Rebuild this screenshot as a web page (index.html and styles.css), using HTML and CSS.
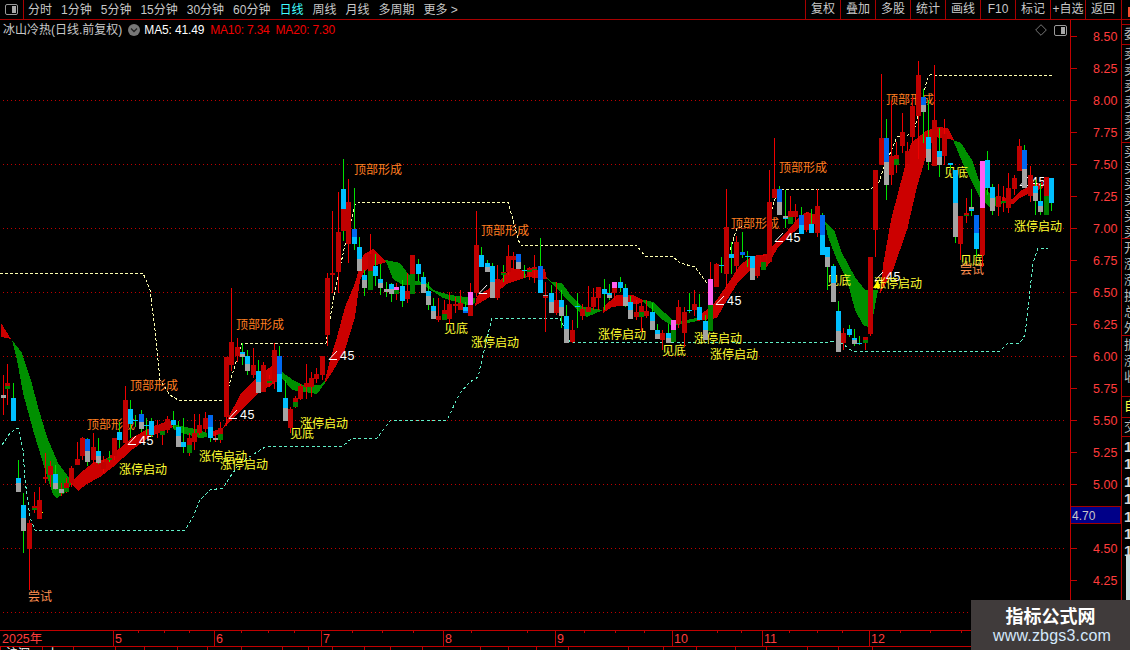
FILE: index.html
```html
<!DOCTYPE html>
<html lang="zh-CN">
<head>
<meta charset="utf-8">
<title>冰山冷热</title>
<link rel="stylesheet" href="styles.css">
</head>
<body>
<header class="toolbar">
  <div class="panel-btn">
    <svg class="panel-icon" viewBox="0 0 13 11"><rect class="pi-frame" x="0.5" y="0.5" width="12" height="10" rx="1.5"/><rect class="pi-fill" x="7" y="2" width="4" height="7"/></svg>
  </div>
  <nav class="periods">
    <span>分时</span><span>1分钟</span><span>5分钟</span><span>15分钟</span><span>30分钟</span><span>60分钟</span><span class="active">日线</span><span>周线</span><span>月线</span><span>多周期</span><span>更多 &gt;</span>
  </nav>
  <nav class="actions">
    <span>复权</span><span>叠加</span><span>多股</span><span>统计</span><span>画线</span><span>F10</span><span>标记</span><span>+自选</span><span>返回</span>
  </nav>
  <div class="corner"><i class="corner-mark"></i></div>
</header>

<main class="stage">
  <section class="chart">
    <div class="legend">
      <span class="legend-title">冰山冷热(日线.前复权)</span>
      <svg class="legend-toggle" viewBox="0 0 12 12"><circle class="lt-disc" cx="6" cy="6" r="6"/><path class="lt-chev" d="M3 4.5 6 7.5 9 4.5"/></svg>
      <span class="ma-white">MA5: 41.49</span>
      <span class="ma-red">MA10: 7.34</span>
      <span class="ma-red">MA20: 7.30</span>
    </div>
    <div class="chart-tools">
      <svg class="diamond" viewBox="0 0 12 12"><path class="dm" d="M6 .7 11.3 6 6 11.3 .7 6Z"/></svg>
      <svg class="panel-icon" viewBox="0 0 13 11"><rect class="pi-frame" x="0.5" y="0.5" width="12" height="10" rx="1.5"/><rect class="pi-fill" x="7" y="2" width="4" height="7"/></svg>
    </div>
    <svg id="plot" class="plot" viewBox="0 20 1070 610" width="1070" height="610"></svg>
  </section>

  <aside class="price-axis">
    <div class="tick"><i></i><b>8.50</b></div>
    <div class="tick"><i></i><b>8.25</b></div>
    <div class="tick"><i></i><b>8.00</b></div>
    <div class="tick"><i></i><b>7.75</b></div>
    <div class="tick"><i></i><b>7.50</b></div>
    <div class="tick"><i></i><b>7.25</b></div>
    <div class="tick"><i></i><b>7.00</b></div>
    <div class="tick"><i></i><b>6.75</b></div>
    <div class="tick"><i></i><b>6.50</b></div>
    <div class="tick"><i></i><b>6.25</b></div>
    <div class="tick"><i></i><b>6.00</b></div>
    <div class="tick"><i></i><b>5.75</b></div>
    <div class="tick"><i></i><b>5.50</b></div>
    <div class="tick"><i></i><b>5.25</b></div>
    <div class="tick"><i></i><b>5.00</b></div>
    <div class="tick"><i></i><b>4.75</b></div>
    <div class="tick"><i></i><b>4.50</b></div>
    <div class="tick"><i></i><b>4.25</b></div>
    <div class="tick"><i></i></div>
    <div class="cursor-price">4.70</div>
  </aside>

  <aside class="side">
    <div class="side-gap"></div>
    <div class="side-cell h20">委</div>
    <div class="side-cell h98">卖卖卖卖卖卖</div>
    <div class="side-cell h96">买买买买买买</div>
    <div class="side-cell h97">开涨涨换总外</div>
    <div class="side-cell h61">振涨收</div>
    <div class="side-cell h21 mine">自</div>
    <div class="side-cell h19">交</div>
    <div class="side-nums"><span>1</span><span>1</span><span>1</span><span>1</span><span>1</span><span>1</span><span>1</span></div>
    <div class="side-box"></div>
  </aside>
</main>

<svg id="dates" class="dates" viewBox="0 630 1130 20" width="1130" height="20"></svg>

<div class="watermark">
  <div class="wm-title">指标公式网</div>
  <div class="wm-url">www.zbgs3.com</div>
</div>
<script src="chart.js"></script>
</body>
</html>
```

FILE: styles.css
```css
* { box-sizing: border-box; }
html, body { margin: 0; padding: 0; height: 650px; overflow: hidden; background: #000; }
body {
  position: relative;
  width: 1130px;
  font: 12px/1 "Liberation Sans", "Noto Sans CJK SC", sans-serif;
  color: #c8c8c8;
  display: flex;
  flex-direction: column;
}

/* toolbar */
.toolbar { display: flex; height: 20px; border-bottom: 1px solid #a80000; flex: none; }
.panel-btn { width: 24px; border-right: 1px solid #a80000; display: flex; align-items: center; justify-content: center; padding-bottom: 1px; }
.panel-icon { width: 13px; height: 11px; }
.pi-frame { fill: none; stroke: #9a9a9a; }
.pi-fill { fill: #a8a8a8; }
.periods { display: flex; flex: 1; gap: 9px; padding-left: 4px; align-items: center; white-space: nowrap; }
.periods .active { color: #40ffff; }
.actions { display: flex; }
.actions span { width: 35px; border-left: 1px solid #a80000; display: flex; align-items: center; justify-content: center; white-space: nowrap; padding-bottom: 1px; }
.corner { width: 9px; border-left: 1px solid #a80000; padding: 7px 0 0 6px; margin-left: 1px; }
.corner-mark { display: block; width: 2px; height: 10px; background: #f05030; }

/* chart */
.stage { display: flex; height: 610px; flex: none; }
.chart { position: relative; width: 1070px; flex: none; }
.plot { display: block; }
.legend { position: absolute; left: 3px; top: 1px; height: 17px; display: flex; align-items: center; white-space: nowrap; z-index: 2; }
.legend-toggle { width: 12px; height: 12px; margin: 0 4px 0 6px; }
.lt-disc { fill: #777; }
.lt-chev { fill: none; stroke: #222; stroke-width: 1.3; }
.ma-white { color: #fff; margin-right: 6px; letter-spacing: -.15px; }
.ma-red { color: #f00000; margin-right: 6px; letter-spacing: -.2px; }
.chart-tools { position: absolute; right: 3px; top: 4px; display: flex; gap: 7px; z-index: 2; align-items: center; }
.diamond { width: 12px; height: 12px; }
.dm { fill: none; stroke: #777; }

.grid { stroke: #c00000; stroke-width: 1; stroke-dasharray: 1 3; shape-rendering: crispEdges; }
.dash-y { fill: none; stroke: #ffffb0; stroke-dasharray: 3 2; shape-rendering: crispEdges; }
.dash-c { fill: none; stroke: #60f0c8; stroke-dasharray: 3 2.5; shape-rendering: crispEdges; }
.band-r { fill: #cc0000; shape-rendering: crispEdges; }
.band-g { fill: #009000; shape-rendering: crispEdges; }
.lab { font: 12px "Noto Sans CJK SC", sans-serif; }
.lab-o { fill: #ff7f20; }
.lab-y { fill: #ffff30; }
.lab-t { fill: #ff9050; }
.ang { fill: none; stroke: #fff; }
.num { font: 12.5px "Liberation Sans", sans-serif; fill: #fff; letter-spacing: .6px; }
.mark { fill: #ffff00; }
.c-r { fill: #c00000; }
.c-g { fill: #008000; }
.c-c { fill: #00bfff; }
.c-b { fill: #0068f0; }
.c-a { fill: #a4a4a4; }
.c-p { fill: #ff60f0; }
.w-R { fill: #f00000; }
.w-G { fill: #00e000; }

/* price axis */
.price-axis { position: relative; width: 51px; flex: none; border-left: 1px solid #c00000; display: flex; flex-direction: column; }
.tick { height: 32px; flex: none; display: flex; align-items: center; }
.tick i { width: 6px; height: 1px; background: #c00000; margin-right: 16px; }
.tick b { font-weight: 400; color: #ff3c3c; font-size: 12.5px; margin-top: 2px; }
.cursor-price { position: absolute; left: 0; top: 486px; width: 50px; height: 18px; background: #000088; border: 1px solid #a00000; border-left: 0; color: #c8c8c8; padding: 3px 0 0 1px; }

/* right side strip */
.side { width: 9px; flex: none; border-left: 1px solid #a80000; overflow: hidden; position: relative; }
.side-gap { height: 5px; border-bottom: 1px solid #a80000; }
.side-cell { width: 9px; padding-left: 2px; font: 13px/16px "Noto Sans CJK SC", sans-serif; border-bottom: 1px solid #a80000; word-break: break-all; color: #b8b8b8; }
.h20 { height: 20px; }
.h98 { height: 98px; }
.h96 { height: 96px; }
.h97 { height: 97px; }
.h61 { height: 61px; }
.h21 { height: 21px; }
.h19 { height: 19px; }
.mine { color: #ffff40; }
.side-nums { display: flex; flex-direction: column; padding: 1px 0 0 2px; font: bold 15px/17.4px "Liberation Sans", sans-serif; color: #d8d8d8; height: 119px; }
.side-box { width: 6px; margin-left: 4px; height: 50px; background: #c8dce0; }

/* date axis */
.dates { display: block; flex: none; }
.axis-line { stroke: #c00000; shape-rendering: crispEdges; }
.date { font: 12.5px "Liberation Sans", "Noto Sans CJK SC", sans-serif; fill: #ff3c3c; }
.under { font: 12px "Noto Sans CJK SC", sans-serif; fill: #fff; }

/* watermark */
.watermark { position: absolute; right: 0; bottom: 0; width: 159px; height: 50px; background: #403b3b; text-align: center; z-index: 5; }
.wm-title { font: bold 18px/20px "Noto Sans CJK SC", sans-serif; color: #fff; padding-top: 5px; }
.wm-url { font: 16px/20px "Liberation Sans", sans-serif; color: #d4e8fa; margin: 1px 0 0 3px; letter-spacing: .2px; }
```

FILE: chart.js
```js
// Candle: "x wickTop wickBottom wickColour seg seg…", seg = colour + top-bottom (page pixels)
var candles = `
3 375 415 R a395-398
7 364 405 R r383-386 g386-389
13 383 421 G c398-421
18 460 492 G c478-483 a483-492
23 493 553 G c505-518 a518-531
29 520 590 R r523-549
34 492 513 R r506-508 g508-510
39 487 519 R r500-519
45 453 483 R r477-479
50 461 487 R r466-475
55 465 490 G c474-483 a483-489
61 483 496 R a489-493
66 478 493 R r483-488 g488-492
71 466 487 R r468-483
77 442 465 R r459-465
82 437 460 R r438-456
87 438 466 G b439-451 a451-462
93 433 464 R r447-460
98 438 464 G c451-456 a456-463
103 456 473 R r462-469
109 451 462 G g458-460
114 438 460 R r438-456
119 422 448 G c432-440
125 386 443 R r400-443
130 400 438 G c409-424
135 415 427 G c420-421
141 410 432 G b414-422 a422-429
146 418 435 G c425-426
151 418 437 G c421-435
157 420 438 R r425-433
162 424 445 R r424-431 g431-435
167 416 433 R r419-430
173 411 428 G c420-425
178 421 447 G c427-436 a436-447
183 418 453 G c442-447
189 433 456 R r438-445 g445-453
194 414 450 R r433-442
199 414 435 R r425-433
205 412 432 R r418-429
210 415 442 G b415-427 c427-438
215 432 442 R a438-440
220 422 443 R r428-434 g434-440
226 357 426 R r357-417
231 288 371 R r342-365
237 338 362 R r347-356
242 343 365 G c352-354 a354-357
247 350 375 G c356-364 a364-371
253 348 378 R r365-375
258 360 393 G c371-382 a382-393
263 362 392 R r365-392
269 375 387 R r379-381 g381-383
274 343 389 R r350-381
279 346 392 G b356-374 c374-392
285 380 421 G c398-408 a408-421
290 407 433 R r409-428
295 396 408 R r398-402 g402-407
300 384 400 R r386-399
306 364 399 R r383-387
311 372 397 R r378-387
316 368 383 R r374-379
322 356 380 R r356-375
327 273 346 R r278-335
332 211 293 R r273-275
338 192 293 R r232-272
343 159 241 G c189-209 r209-231
348 179 263 R r202-244
354 188 250 G b229-237 c237-244
359 237 271 G c247-259 a259-271
364 270 296 G c275-280 a280-288
370 234 290 R r254-271 g271-290
375 254 286 G c266-276
380 264 295 G c279-283 a283-288
386 282 297 G a289-292
391 283 302 G c284-289 a289-294
396 283 300 R p287-290 g290-294
402 280 307 G c286-301
407 273 303 R r291-299
412 255 294 R r255-274 g274-294
418 259 281 G c264-274
423 272 293 G c277-284 a284-293
428 282 310 G c291-296 a296-305
433 298 319 G c306-311 a311-319
438 298 322 R r316-320
444 300 320 R r310-314 g314-320
449 292 324 R r304-319
455 297 313 R r304-306
460 290 310 R r303-310
465 302 313 G c307-311 b311-313
470 283 316 R p292-305 r305-316
476 211 297 R r245-293
481 247 267 G c255-267
487 260 272 G c263-267 a267-272
492 263 298 G c266-282 a282-298
497 265 300 R r279-298
503 265 282 G r272-273 g273-275
508 245 275 R r256-272
513 252 270 R r256-260
518 254 269 G b254-262 a262-269
524 265 278 G c270-271
529 267 280 R r268-270 g270-272
534 255 283 R r267-269 g269-270
540 238 293 G b266-280 c280-293
545 282 332 R a295-296 r296-298
551 285 313 G c293-302 a302-313
556 282 315 R r300-313
561 290 328 G c300-307 a307-316
566 305 343 G c316-329 a329-343
572 320 343 R r330-342
577 293 328 G c306-307
582 304 320 R r309-316
588 286 312 R r307-312
593 288 310 R r297-307
598 287 310 R r287-298
604 279 310 G c289-294
609 284 300 G c293-295 a295-298
614 282 300 R p282-288 r288-293
620 277 292 G c282-288
625 284 307 G c288-297 a297-306
630 296 319 G c302-310 a310-319
636 300 320 R r312-317
641 302 332 R r306-312 g312-317
646 300 318 R r311-316
652 303 330 G c312-321 a321-330
657 324 339 G c330-334 a334-339
662 330 350 R r333-340
668 324 343 G c333-338 a338-343
673 320 342 G p320-330 g330-342
678 300 328 R r307-324
684 307 347 R r312-333
689 293 313 G c310-311
694 290 316 R r304-310
699 294 320 G c307-320
705 315 340 G c321-330 a330-340
710 262 331 R p279-305 g305-331
716 263 287 R r264-287
721 257 273 G c265-266
726 189 288 R r227-274
731 242 274 G c254-258
736 236 272 R r242-266
742 232 258 G b252-255
747 251 267 G c256-257
752 256 280 G c256-268 a268-280
757 256 278 R r256-276
763 255 270 R r256-262 g262-270
769 170 263 R r202-262
774 138 198 R r189-198
779 186 215 G b189-202 a202-215
785 190 228 G a216-218 c218-219
790 196 224 R r211-217 g217-224
795 204 222 R r211-217
801 207 234 G b215-225 c225-234
806 212 232 R r214-230
811 209 233 G c224-233
817 189 237 R r206-233
822 213 255 G b215-235 c235-255
827 247 290 G c247-257 a257-267
833 264 302 G c266-283 a283-302
838 301 352 G c311-331 a331-352
843 328 350 R r333-343
849 325 337 G c329-335
854 329 346 G c338-340 a340-344
859 336 345 G c343-344
865 337 350 R r337-340 g340-343
870 257 336 R r257-334
875 170 257 R r170-230
881 74 160 R r138-165
886 119 200 G b138-162 a162-185
891 101 185 R r156-175
896 142 173 R r155-159 g159-165
902 113 153 R r132-146
907 142 165 R r151-164
912 97 143 R r106-137
918 61 159 R r75-116
923 89 143 G b97-105 a105-112
928 100 170 G c137-149 a149-162
934 65 166 R r120-166
939 128 177 G c151-157 a157-165
944 119 165 R r134-156
950 163 170 G c163-165
955 170 243 G c170-203 a203-237
960 216 260 R r216-244
966 198 223 R r213-215 g215-216
971 189 216 G a207-209 c209-211
976 215 257 G b215-233 c233-249
982 161 267 R p161-208 r208-255
987 151 195 G c160-188
992 184 215 G c187-198 a198-211
998 184 216 R r196-207
1003 186 212 R g201-203
1008 173 213 R r188-208
1014 175 195 R r178-189
1019 139 171 R r146-171
1024 145 188 G b150-169 a169-188
1030 166 202 R r175-196
1035 180 215 G c186-193 a193-201
1040 183 215 G c201-206 a206-212
1046 177 215 R r177-196 g196-215
1051 178 211 G c178-203`;

var bands = [
 ["r","1,323 11,339 1,337"],
 ["g","12,340 22,353 31,380 38,407 47,437 58,463 67,475 72,483 66,492 57,498 53,495 43,463 33,430 23,393 17,360"],
 ["r","70,483 80,473 93,463 107,458 120,448 133,437 150,428 170,420 173,427 167,429 150,437 133,449 113,467 100,477 87,484 78,491"],
 ["g","173,424 185,427 200,430 207,433 207,437 200,438 185,434 173,429"],
 ["r","208,432 222,429 223,434 210,437"],
 ["r","227,420 240,395 257,377 273,365 282,372 282,378 273,384 257,394 240,412 223,428"],
 ["g","282,372 293,380 303,385 320,385 325,380 325,383 317,394 292,390 282,378"],
 ["r","325,380 330,360 337,337 345,307 355,283 363,255 373,249 383,258 386,262 380,264 372,266 364,272 360,280 355,317 345,350 333,371 325,383"],
 ["g","385,260 400,263 413,280 427,283 433,290 450,295 475,298 475,303 470,306 443,298 423,285 403,285 393,279 387,264"],
 ["r","477,296 490,288 500,281 510,268 523,270 527,277 507,284 493,295 475,306"],
 ["r","527,271 545,269 547,279 527,277"],
 ["g","547,278 552,282 562,283 572,297 582,307 603,310 587,317 577,310 563,295"],
 ["r","603,307 617,295 633,295 643,300 643,302 637,304 612,307 603,313"],
 ["g","643,300 653,302 665,313 675,322 697,318 697,321 672,326 660,318 650,308 643,302"],
 ["r","697,317 713,305 727,285 740,265 752,256 767,254 773,245 788,230 800,216 807,212 823,217 825,223 803,225 790,235 777,249 767,267 753,267 737,284 727,300 717,318 697,321"],
 ["g","825,222 835,232 842,253 855,277 865,290 878,290 873,317 868,327 863,325 855,310 847,280 837,260 828,237"],
 ["r","883,265 891,220 904,170 911,143 926,131 937,127 948,128 954,140 948,139 934,137 927,153 917,187 907,230 893,270 880,294"],
 ["g","953,140 961,143 972,160 979,180 989,193 995,197 1002,201 1002,204 990,208 980,198 973,184 963,164"],
 ["r","1002,197 1012,199 1020,191 1033,184 1043,182 1043,188 1030,193 1020,198 1013,204 1002,203"]
];

var dashY = [
 "0,273 143,273 150,290 155,330 160,380 170,395 178,400 225,401 232,375 242,343 326,343 335,290 345,245 355,205 360,202 508,202 513,220 520,245 637,246 645,256 672,256 680,263 695,267 703,278 707,283",
 "730,250 737,228 745,226",
 "770,215 778,189 870,189 878,185 883,170 897,137 907,136 915,127 920,107 927,80 930,75 1052,76"
];
var dashC = [
 "2,445 10,433 18,428 23,450 25,480 30,517 35,530 185,530 193,517 200,500 210,490 223,488 230,477 240,463 265,447 343,446 352,438 377,438 390,421 447,420 460,393 470,382 478,377 485,347 492,318 560,318 570,342 830,342 837,340 847,347 852,351 1000,351 1008,343 1020,343 1025,335 1028,308 1030,290 1033,263 1038,248 1048,248"
];

var labels = [
 ["顶部形成","o",87,424],["顶部形成","o",130,385],["顶部形成","o",236,324],["顶部形成","o",354,169],
 ["顶部形成","o",481,230],["顶部形成","o",731,223],["顶部形成","o",779,167],["顶部形成","o",886,99],
 ["涨停启动","y",119,469],["涨停启动","y",199,456],["涨停启动","y",220,464],["涨停启动","y",300,423],
 ["涨停启动","y",471,342],["涨停启动","y",598,334],["涨停启动","y",694,338],["涨停启动","y",710,354],
 ["涨停启动","y",874,283],["涨停启动","y",1014,226],
 ["见底","y",290,433],["见底","y",444,328],["见底","y",662,350],["见底","y",827,280],["见底","y",944,172],["见底","y",960,260],
 ["尝试","t",28,596],["尝试","t",960,269]
];
var angles = [[128,444,1],[229,418,1],[329,359,1],[479,293,0],[716,304,1],[775,241,1],[875,280,1],[1020,185,1]];

var s = "";
for (var y = 100; y <= 612; y += 64) s += '<line class="grid" x1="3" x2="1067" y1="'+(y+.5)+'" y2="'+(y+.5)+'"/>';
dashY.forEach(function(p){ s += '<polyline class="dash-y" points="'+p+'"/>'; });
dashC.forEach(function(p){ s += '<polyline class="dash-c" points="'+p+'"/>'; });
bands.forEach(function(b){ s += '<polygon class="band-'+b[0]+'" points="'+b[1]+'"/>'; });
angles.forEach(function(a){
  s += '<polyline class="ang" points="'+(a[0]+8)+','+(a[1]-8)+' '+a[0]+','+(a[1]+.5)+' '+(a[0]+8)+','+(a[1]+.5)+'"/>';
  if (a[2]) s += '<text class="num" x="'+(a[0]+11)+'" y="'+(a[1]+1)+'">45</text>';
});
labels.forEach(function(l){ s += '<text class="lab lab-'+l[1]+'" x="'+l[2]+'" y="'+(l[3]+4.5)+'">'+l[0]+'</text>'; });
s += '<polygon class="mark" points="873,288 878,280 880,288"/><rect class="mark" x="40" y="512" width="3" height="1"/>';
candles.trim().split("\n").forEach(function(line){
  var t = line.trim().split(" "), x = +t[0], top = +t[1], bot = +t[2];
  s += '<rect class="w-'+t[3]+'" x="'+x+'" y="'+top+'" width="1" height="'+(bot-top)+'"/>';
  t.slice(4).forEach(function(seg){
    var m = seg.slice(1).split("-");
    s += '<rect class="c-'+seg[0]+'" x="'+(x-2)+'" y="'+m[0]+'" width="5" height="'+(m[1]-m[0])+'"/>';
  });
});
document.getElementById("plot").innerHTML = s;

var d = '<line class="axis-line" x1="0" x2="1130" y1="630.5" y2="630.5"/><line class="axis-line" x1="0" x2="1130" y1="646.5" y2="646.5"/>';
[113,214,321,443,555,672,762,869].forEach(function(x){ d += '<line class="axis-line" x1="'+(x+.5)+'" x2="'+(x+.5)+'" y1="631" y2="646"/>'; });
[138,164,189,241,268,294,352,382,413,471,527,584,615,644,717,741,789,817,842,900,930,961].forEach(function(x){
  d += '<line class="axis-line" x1="'+(x+.5)+'" x2="'+(x+.5)+'" y1="631" y2="633"/>';
});
[0,42,73,115,144,177,207,241,282,308,332,364,390,422,480,508,536,568,628,663,696,735,766,807,838,872].forEach(function(x){
  d += '<line class="axis-line" x1="'+(x+.5)+'" x2="'+(x+.5)+'" y1="647" y2="650"/>';
});
[["2025年",2],["5",115],["6",216],["7",323],["8",445],["9",557],["10",674],["11",764],["12",871]].forEach(function(m){
  d += '<text class="date" x="'+m[1]+'" y="643">'+m[0]+'</text>';
});
d += '<text class="under" x="6" y="658">沪深</text><text class="under" x="47" y="658">上</text>';
document.getElementById("dates").innerHTML = d;
```
